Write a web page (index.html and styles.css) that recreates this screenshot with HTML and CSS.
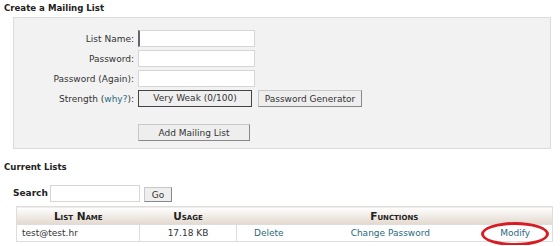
FILE: index.html
```html
<!DOCTYPE html>
<html lang="en">
<head>
    <meta charset="UTF-8">
    <title>Mailing Lists</title>
    <link rel="stylesheet" href="styles.css">
</head>
<body>
    <h2 class="section-title">Create a Mailing List</h2>
    <div class="form-box">
        <div class="form-grid">
            <label class="field-label">List Name:</label>
            <div class="field"><input type="text" class="text-input focused"></div>

            <label class="field-label">Password:</label>
            <div class="field"><input type="password" class="text-input"></div>

            <label class="field-label">Password (Again):</label>
            <div class="field"><input type="password" class="text-input"></div>

            <label class="field-label">Strength (<a href="#" class="link">why?</a>):</label>
            <div class="field">
                <div class="strength">Very Weak (0/100)</div>
                <button class="btn btn-gen">Password Generator</button>
            </div>

            <span></span>
            <div class="field add-row"><button class="btn btn-add">Add Mailing List</button></div>
        </div>
    </div>

    <h2 class="section-title current">Current Lists</h2>
    <div class="search-row">
        <span class="search-label">Search</span>
        <input type="text" class="search-input">
        <button class="btn btn-go">Go</button>
    </div>

    <table class="lists">
        <tr>
            <th class="col-name">List Name</th>
            <th class="col-usage">Usage</th>
            <th colspan="3">Functions</th>
        </tr>
        <tr>
            <td class="col-name">test@test.hr</td>
            <td class="col-usage">17.18 KB</td>
            <td class="fn-delete"><a href="#" class="link">Delete</a></td>
            <td class="fn-pass"><a href="#" class="link">Change Password</a></td>
            <td class="fn-modify"><a href="#" class="link">Modify</a><span class="circle"></span></td>
        </tr>
    </table>
</body>
</html>
```

FILE: styles.css
```css
body {
    font-family: "DejaVu Sans", Verdana, sans-serif;
    font-size: 9px;
    color: #333;
    background-color: #fff;
    margin: 0;
    padding: 3px 4px;
}
.section-title {
    font-size: 8.6px;
    font-weight: bold;
    color: #222;
    margin: 0 0 3px;
    line-height: 11px;
}
.section-title.current {
    margin-top: 13px;
}
.form-box {
    margin-left: 9px;
    width: 538px;
    height: 132px;
    background-color: #f2f2f2;
    border: 1px solid #dcdcdc;
    box-sizing: border-box;
    padding-top: 12px;
}
.form-grid {
    display: grid;
    grid-template-columns: 120px auto;
    column-gap: 4px;
    row-gap: 3px;
    align-items: center;
}
.field-label {
    text-align: right;
}
.field {
    display: flex;
    gap: 6px;
    align-items: center;
}
.add-row {
    margin-top: 14px;
}
.text-input {
    width: 117px;
    height: 17px;
    box-sizing: border-box;
    border: 1px solid #d6d6d6;
    background: #fff;
    margin: 0;
    padding: 0 2px;
}
.text-input.focused {
    border-left: 2px solid #666;
}
.strength {
    width: 114px;
    height: 17px;
    box-sizing: border-box;
    border: 1px solid #444;
    background: #efefef;
    text-align: center;
    line-height: 15px;
    font-size: 9px;
}
.btn {
    font-family: inherit;
    font-size: 9px;
    color: #333;
    height: 17px;
    padding: 0;
    background: #eeeeee;
    border: 1px solid #c8c8c8;
    border-right-color: #888;
    border-bottom-color: #888;
    border-radius: 0;
}
.btn-gen {
    width: 104px;
}
.btn-add {
    width: 112px;
}
.link {
    color: #2b6a80;
    text-decoration: none;
}
.search-row {
    display: flex;
    align-items: center;
    margin: 11px 0 0 9px;
    height: 18px;
}
.search-label {
    font-weight: bold;
    color: #222;
    width: 37px;
}
.search-input {
    width: 90px;
    height: 17px;
    box-sizing: border-box;
    border: 1px solid #d6d6d6;
    margin: 0 4px 0 0;
}
.btn-go {
    width: 28px;
    height: 15px;
    margin-top: 3px;
}
.lists {
    margin: 4px 0 0 12px;
    width: 537px;
    border-collapse: collapse;
    border: 1px solid #ddd;
}
.lists th {
    height: 17px;
    padding: 0;
    font-variant: small-caps;
    font-size: 10.5px;
    color: #222;
    background: linear-gradient(#ffffff, #e2d8ce);
    text-align: center;
}
.lists td {
    height: 16px;
    padding: 0 5px;
    border-top: 1px solid #ddd;
}
.col-name {
    width: 112px;
}
.col-usage {
    width: 86px;
    text-align: center;
}
.lists td.col-name, .lists td.col-usage {
    border-right: 1px solid #ddd;
}
.fn-delete {
    padding-left: 17px !important;
}
.fn-pass {
    text-align: center;
}
.fn-modify {
    position: relative;
    text-align: right;
    padding-right: 22px !important;
}
.circle {
    position: absolute;
    right: 3px;
    top: -3px;
    width: 62px;
    height: 18px;
    border: 3px solid #d81c24;
    border-radius: 50%;
}
```
